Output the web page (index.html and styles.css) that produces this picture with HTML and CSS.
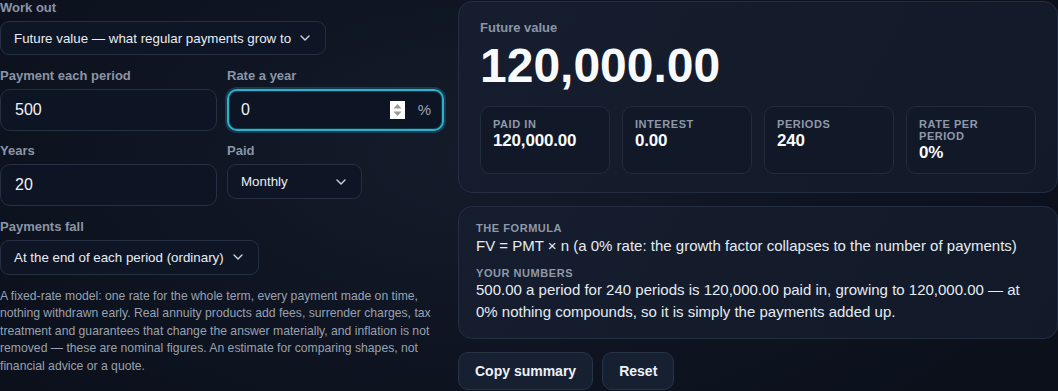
FILE: index.html
```html
<html lang="en">
  <head>
    <meta name="viewport" content="width=device-width,initial-scale=1">
    <title>Annuity calculator</title>
    <link rel="stylesheet" href="styles.css">
  </head>
<body>
  <div class="page">
    <div class="inputs">
      <div class="field">
        <label class="label">Work out</label>
        <div class="select-wrap select-mode">
          <select class="select">
            <option>Future value — what regular payments grow to</option>
          </select>
          <svg class="chevron" width="10" height="6" viewBox="0 0 10 6"><path d="M1 1l4 4 4-4" fill="none" stroke="#cbd5e1" stroke-width="1.4" stroke-linecap="round" stroke-linejoin="round"/></svg>
        </div>
      </div>

      <div class="pair">
        <div class="field">
          <label class="label">Payment each period</label>
          <div class="input-box">
            <input class="input" type="text" value="500">
          </div>
        </div>
        <div class="field">
          <label class="label">Rate a year</label>
          <div class="input-box focused">
            <input class="input" type="text" value="0">
            <svg class="spinner" width="15" height="18" viewBox="0 0 15 18">
              <rect width="15" height="18" fill="#ffffff"/>
              <path d="M3.5 7.5L7.5 3l4 4.5z" fill="#9a9a9a"/>
              <path d="M3.5 10.5L7.5 15l4-4.5z" fill="#9a9a9a"/>
            </svg>
            <span class="suffix">%</span>
          </div>
        </div>
      </div>

      <div class="pair">
        <div class="field">
          <label class="label">Years</label>
          <div class="input-box">
            <input class="input" type="text" value="20">
          </div>
        </div>
        <div class="field">
          <label class="label">Paid</label>
          <div class="select-wrap select-freq">
            <select class="select">
              <option>Monthly</option>
              <option>Quarterly</option>
              <option>Yearly</option>
            </select>
            <svg class="chevron" width="10" height="6" viewBox="0 0 10 6"><path d="M1 1l4 4 4-4" fill="none" stroke="#cbd5e1" stroke-width="1.4" stroke-linecap="round" stroke-linejoin="round"/></svg>
          </div>
        </div>
      </div>

      <div class="field">
        <label class="label">Payments fall</label>
        <div class="select-wrap select-timing">
          <select class="select">
            <option>At the end of each period (ordinary)</option>
            <option>At the start of each period (due)</option>
          </select>
          <svg class="chevron" width="10" height="6" viewBox="0 0 10 6"><path d="M1 1l4 4 4-4" fill="none" stroke="#cbd5e1" stroke-width="1.4" stroke-linecap="round" stroke-linejoin="round"/></svg>
        </div>
      </div>

      <p class="note">A fixed-rate model: one rate for the whole term, every payment made on time, nothing withdrawn early. Real annuity products add fees, surrender charges, tax treatment and guarantees that change the answer materially, and inflation is not removed — these are nominal figures. An estimate for comparing shapes, not financial advice or a quote.</p>
    </div>

    <div class="results">
      <div class="card result">
        <div class="result-label">Future value</div>
        <div class="result-value">120,000.00</div>
        <div class="stats">
          <div class="stat">
            <div class="stat-label">Paid in</div>
            <div class="stat-value">120,000.00</div>
          </div>
          <div class="stat">
            <div class="stat-label">Interest</div>
            <div class="stat-value">0.00</div>
          </div>
          <div class="stat">
            <div class="stat-label">Periods</div>
            <div class="stat-value">240</div>
          </div>
          <div class="stat">
            <div class="stat-label">Rate per period</div>
            <div class="stat-value">0%</div>
          </div>
        </div>
      </div>

      <div class="card explain">
        <div class="stat-label">The formula</div>
        <div class="formula">FV = PMT × n (a 0% rate: the growth factor collapses to the number of payments)</div>
        <div class="stat-label second">Your numbers</div>
        <div class="numbers">500.00 a period for 240 periods is 120,000.00 paid in, growing to 120,000.00 — at 0% nothing compounds, so it is simply the payments added up.</div>
      </div>

      <div class="actions">
        <button class="button">Copy summary</button>
        <button class="button">Reset</button>
      </div>
    </div>
  </div>
</body>
</html>
```

FILE: styles.css
```css
html, body {
  padding: 0;
  margin: 0;
  height: 100%;
}
body {
  font-family: "Liberation Sans", Arial, sans-serif;
  color: #eef2f7;
  background: radial-gradient(ellipse 60% 90% at 45% 40%, #141c2b 0%, #0e1421 55%, #0b101b 100%);
  background-color: #0c121e;
}
.page {
  display: grid;
  grid-template-columns: 444px 1fr;
  gap: 14px;
}
.inputs {
  display: flex;
  flex-direction: column;
  gap: 12.5px;
}
.field {
  display: flex;
  flex-direction: column;
  align-items: flex-start;
  min-width: 0;
}
.pair {
  display: grid;
  grid-template-columns: minmax(0, 1fr) minmax(0, 1fr);
  gap: 10px;
}
.pair .field {
  align-items: stretch;
}
.pair .field .select-wrap {
  align-self: flex-start;
}
.label {
  font-size: 13px;
  line-height: 16px;
  font-weight: bold;
  color: #8b95a6;
  margin-bottom: 5px;
}
.select-wrap {
  position: relative;
  display: inline-block;
}
.select {
  display: block;
  appearance: none;
  -webkit-appearance: none;
  font-family: inherit;
  font-size: 13.333px;
  color: #e8edf4;
  background: #0e1525;
  border: 1px solid #263042;
  border-radius: 9px;
  height: 34px;
  padding: 0 30px 0 13px;
  outline: none;
}
.select-mode .select {
  width: 326px;
}
.select-freq .select {
  width: 135px;
  height: 35px;
}
.select-timing .select {
  width: 259px;
  height: 35px;
}
.chevron {
  position: absolute;
  right: 16px;
  top: 50%;
  margin-top: -3px;
  pointer-events: none;
}
.input-box {
  display: flex;
  align-items: center;
  height: 42px;
  box-sizing: border-box;
  padding: 0 12px 0 14px;
  background: #0d1423;
  border: 1px solid #263042;
  border-radius: 10px;
}
.input-box.focused {
  border: 2px solid #2fb0c8;
  padding: 0 11px 0 12px;
  box-shadow: inset 0 0 0 1px rgba(20, 80, 100, 0.6), 0 0 0 2px rgba(30, 130, 160, 0.35);
}
.input {
  flex: 1;
  width: 0;
  min-width: 0;
  border: none;
  outline: none;
  background: transparent;
  font-family: inherit;
  font-size: 16px;
  color: #eef2f7;
  padding: 0;
}
.spinner {
  margin-right: 13px;
}
.suffix {
  font-size: 15px;
  color: #9aa4b4;
}
.note {
  margin: 1px 0 0;
  font-size: 12.2px;
  line-height: 17.4px;
  color: #98a1b0;
}
.results {
  display: flex;
  flex-direction: column;
  gap: 13px;
  padding-top: 1px;
}
.card {
  border: 1px solid #242e40;
  border-radius: 14px;
  background: linear-gradient(120deg, #151d2e 0%, #141c2c 50%, #121a29 100%);
}
.result {
  padding: 18px 21px 18px;
}
.result-label {
  font-size: 13px;
  line-height: 16px;
  font-weight: bold;
  color: #8b95a6;
}
.result-value {
  margin-top: 3px;
  font-size: 48px;
  line-height: 53px;
  font-weight: bold;
  color: #f8fafc;
}
.stats {
  margin-top: 14px;
  display: grid;
  grid-template-columns: repeat(4, 1fr);
  gap: 12px;
}
.stat {
  border: 1px solid #222c3d;
  border-radius: 10px;
  background: #111828;
  padding: 11px 12px 10px;
}
.stat-label {
  font-size: 11px;
  line-height: 12px;
  font-weight: bold;
  letter-spacing: 0.05em;
  text-transform: uppercase;
  color: #8e98a9;
}
.stat-value {
  margin-top: 1px;
  font-size: 17px;
  line-height: 20px;
  font-weight: bold;
  letter-spacing: -0.01em;
  color: #f8fafc;
}
.explain {
  padding: 15px 17px 15px;
}
.formula {
  margin-top: 2px;
  font-size: 15px;
  line-height: 20px;
  color: #e6ebf2;
}
.stat-label.second {
  margin-top: 11px;
}
.numbers {
  font-size: 15px;
  line-height: 22px;
  color: #e6ebf2;
}
.actions {
  display: flex;
  gap: 9px;
}
.button {
  font-family: inherit;
  font-size: 14px;
  font-weight: bold;
  color: #eef2f7;
  background: #172030;
  border: 1px solid #283346;
  border-radius: 10px;
  height: 38px;
  padding: 0 16px;
}
```
